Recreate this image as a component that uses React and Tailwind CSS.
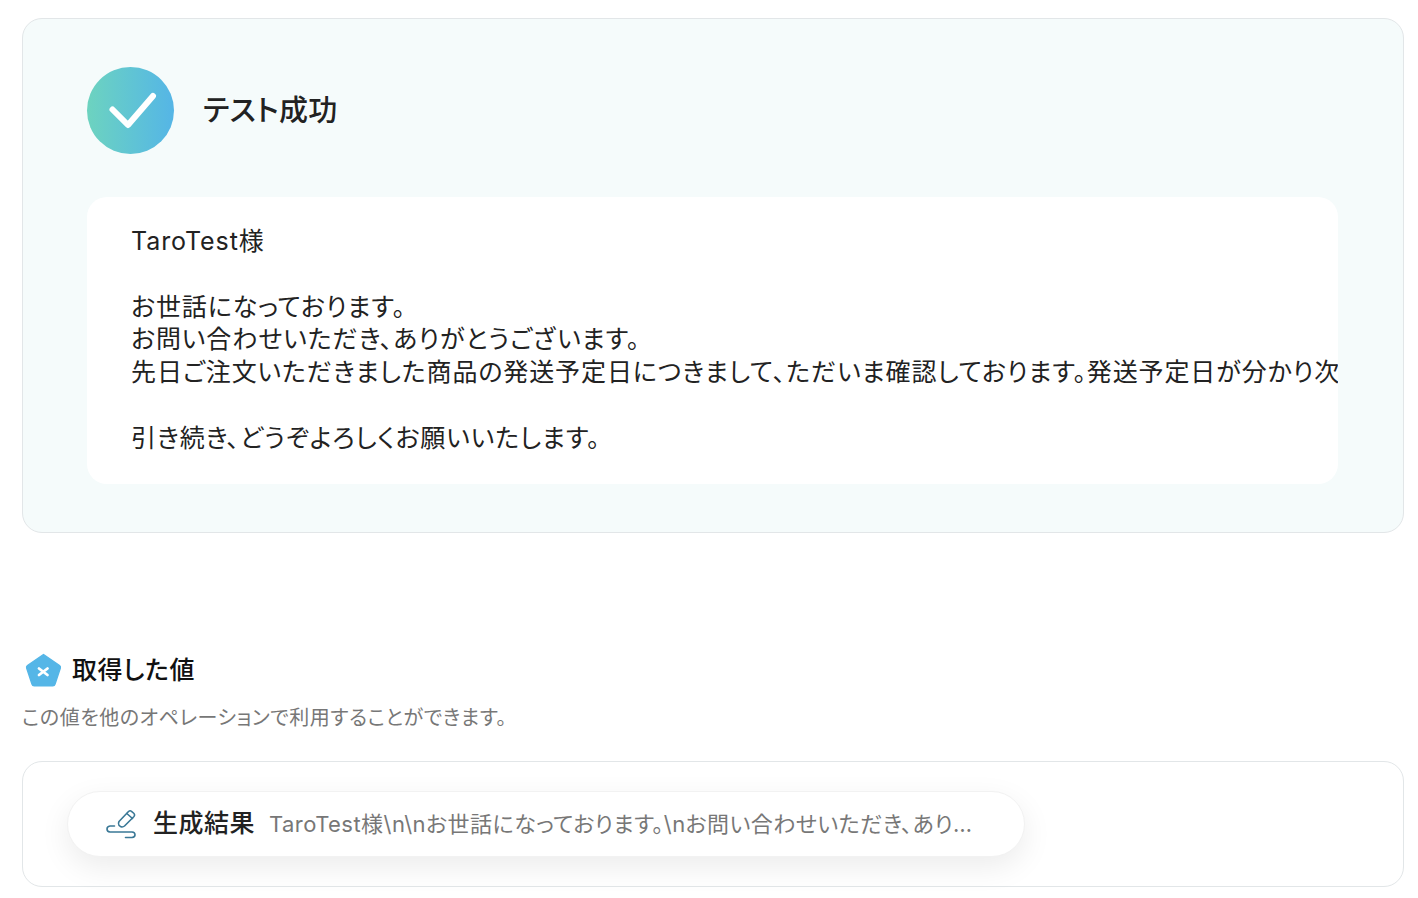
import React from 'react';

const FONT = "[font-family:Inter,'Noto_Sans_CJK_JP',sans-serif] [font-feature-settings:'palt']";

function CheckBadge() {
  return (
    <div className="flex h-[87px] w-[87px] shrink-0 items-center justify-center rounded-full bg-gradient-to-r from-[#6dd3bf] to-[#55b5e6]">
      <svg width="87" height="87" viewBox="0 0 87 87" fill="none">
        <path d="M25.500 42.500L41 58L66 29" stroke="white" strokeWidth="6" strokeLinecap="round" strokeLinejoin="round" />
      </svg>
    </div>
  );
}

function VariableIcon() {
  return (
    <svg width="38" height="36" viewBox="0 0 38 36" className="shrink-0">
      <path d="M18.500 2.500L34.500 13.500Q35.800 14.500 35.300 16L30 32Q29.500 33.800 27.800 33.800H9.200Q7.500 33.800 7 32L1.700 16Q1.200 14.500 2.500 13.500Z" fill="#55b6e7" stroke="#55b6e7" strokeWidth="1.500" strokeLinejoin="round" />
      <path d="M14 16.500L22.500 23M22.500 16.500L14 23" stroke="white" strokeWidth="2.800" strokeLinecap="round" />
    </svg>
  );
}

function PenIcon() {
  return (
    <svg width="32" height="32" viewBox="0 0 32 32" fill="none" stroke="#3a7896" strokeWidth="1.600" strokeLinecap="round" strokeLinejoin="round" className="shrink-0">
      <path d="M14 13.500L23.500 3.500Q25 2.200 26.500 3.300L29 5.500Q30.300 7 29 8.500L19.500 18Q18 19.300 16 18.800L14 17.300Q12.800 15.500 14 13.500Z" />
      <path d="M21.800 5.500L27.500 10.500" />
      <path d="M9.500 18H5Q2 18.300 2 21Q2 23.700 5 24H27Q30 24.300 30 26.800Q30 29.300 27 29.500H20.500" />
    </svg>
  );
}

export default function App() {
  return (
    <div className={`min-h-screen bg-white px-[22px] pt-[18px] pr-[14px] ${FONT}`}>
      {/* Test result */}
      <section className="rounded-[20px] border border-[#e2e6e8] bg-[#f5fbfb] pt-[48px] pr-[65px] pb-[48px] pl-[64px]">
        <div className="flex items-center gap-[29px]">
          <CheckBadge />
          <h2 className="text-[29px] leading-none font-medium tracking-[0.4px] text-[#222222]">テスト成功</h2>
        </div>
        <div className="mt-[43px] h-[287px] overflow-hidden rounded-[20px] bg-white pt-[28px] pl-[44px]">
          <p className="text-[25px] leading-[32.750px] tracking-[0.9px] whitespace-pre text-[#222222]">
            {'TaroTest様\n\nお世話になっております。\nお問い合わせいただき、ありがとうございます。\n先日ご注文いただきました商品の発送予定日につきまして、ただいま確認しております。発送予定日が分かり次第、改めてご連絡いたします。\n\n引き続き、どうぞよろしくお願いいたします。'}
          </p>
        </div>
      </section>

      {/* Output values */}
      <section className="mt-[119px]">
        <div className="flex items-center gap-[9px] pl-[3px]">
          <VariableIcon />
          <h3 className="text-[25px] leading-none font-medium tracking-[0.6px] text-[#111111]">取得した値</h3>
        </div>
        <p className="mt-[17px] text-[20px] leading-[26px] tracking-[0.55px] text-[#777777]">この値を他のオペレーションで利用することができます。</p>
        <div className="mt-[30px] h-[126px] rounded-[20px] border border-[#e2e6e8] bg-white pt-[29px] pl-[44px]">
          <div className="flex h-[66px] w-[958px] items-center rounded-full border border-[#f2f2f2] bg-white pl-[37px] shadow-[0_10px_30px_rgba(0,0,0,0.08)]">
            <PenIcon />
            <span className="ml-[16px] text-[25px] font-medium tracking-[0.5px] whitespace-nowrap text-[#222222]">生成結果</span>
            <span className="ml-[14px] w-[708px] truncate text-[22px] tracking-[0.45px] text-[#777777]">
              TaroTest様\n\nお世話になっております。\nお問い合わせいただき、ありがとうございます。
            </span>
          </div>
        </div>
      </section>
    </div>
  );
}
